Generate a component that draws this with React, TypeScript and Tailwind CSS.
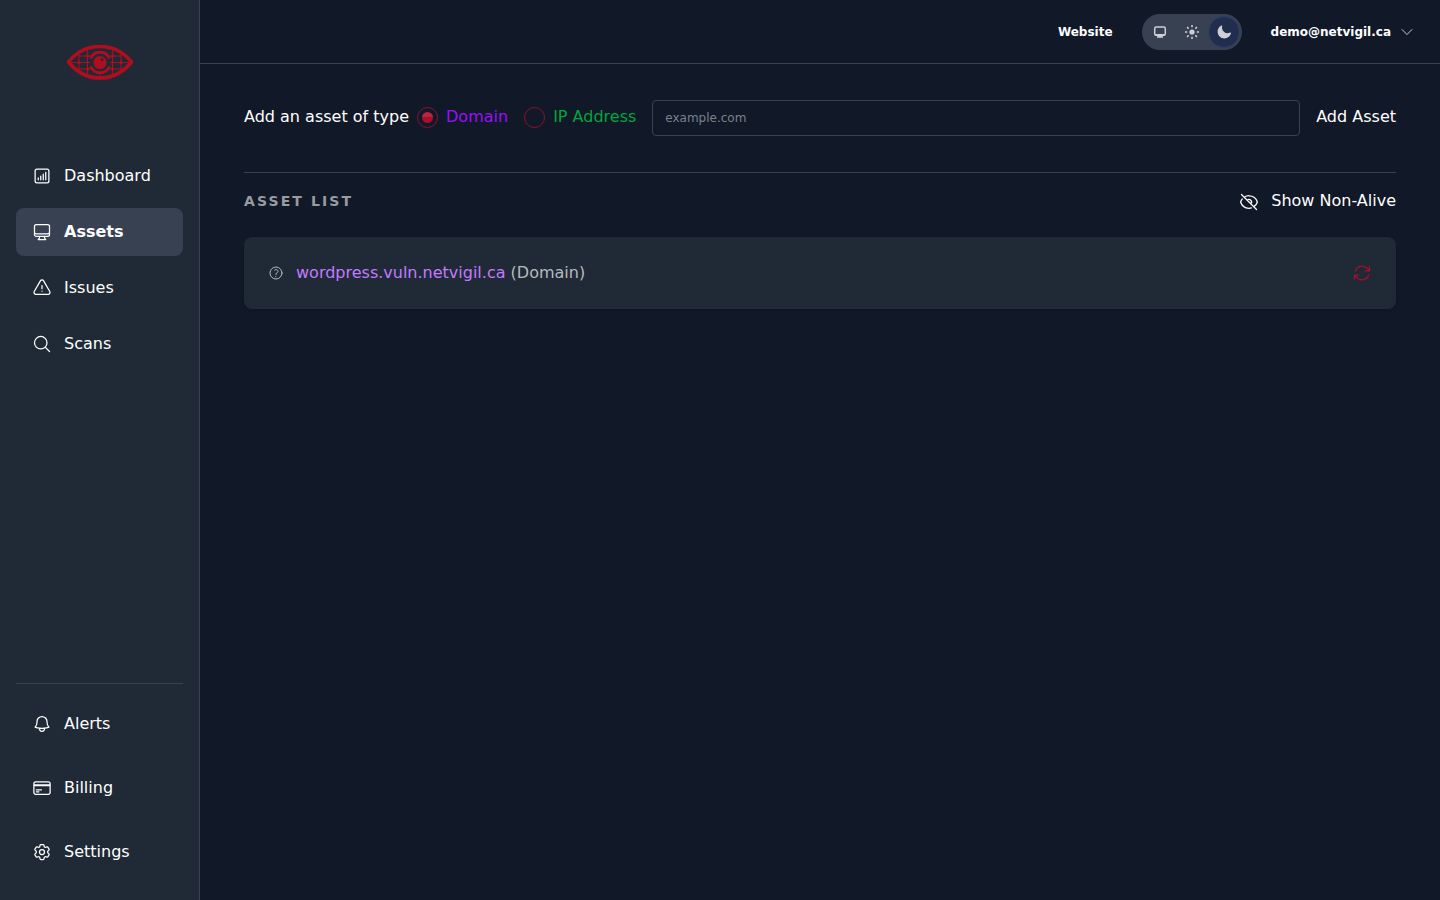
import { useState } from 'react';
import type { ReactNode } from 'react';
import type { IconType } from 'react-icons';
import {
  HiOutlineArrowPath,
  HiOutlineBell,
  HiOutlineChartBarSquare,
  HiOutlineChevronDown,
  HiOutlineCog6Tooth,
  HiOutlineComputerDesktop,
  HiOutlineCreditCard,
  HiOutlineExclamationTriangle,
  HiOutlineEyeSlash,
  HiOutlineMagnifyingGlass,
  HiOutlineQuestionMarkCircle,
} from 'react-icons/hi2';

function Logo() {
  return (
    <svg viewBox="0 0 66 36" className="h-9 w-[66px] text-[#b00d1e]" fill="none" stroke="currentColor" role="img" aria-label="NetVigil">
      <path d="M1.5 18C10 7.500 20 2.500 33 2.500s23 5 31.500 15.500C56 28.500 46 34 33 34S10 28.500 1.500 18Z" strokeWidth="3.600" strokeLinejoin="round" />
      <path d="M2 18.500h21M43 18.500h21M12 12h12M42 12h12M12 25h12M42 25h12M12 10v17M20.500 5v26M45.500 5v26M54 10v17M33 29v5" strokeWidth="1.200" />
      <path d="M23.700 14.500a10.200 10.200 0 0 1 18.800 0M42.500 22.500a10.200 10.200 0 0 1-18.800 0" strokeWidth="2.800" />
      <circle cx="33" cy="18.500" r="6.600" fill="currentColor" stroke="none" />
      <circle cx="35" cy="15.500" r="1.500" fill="#212a37" stroke="none" />
      <g fill="currentColor" stroke="none">
        <circle cx="12" cy="18.500" r="1.700" />
        <circle cx="20.500" cy="12" r="1.700" />
        <circle cx="20.500" cy="25" r="1.700" />
        <circle cx="45.500" cy="12" r="1.700" />
        <circle cx="45.500" cy="25" r="1.700" />
        <circle cx="54" cy="18.500" r="1.700" />
      </g>
    </svg>
  );
}

function NavItem({ icon: Icon, active, children }: { icon: IconType; active?: boolean; children: ReactNode }) {
  return (
    <a
      href="#"
      aria-current={active ? 'page' : undefined}
      className={`flex h-12 items-center gap-3 rounded-lg px-4 ${active ? 'bg-[#384152] font-bold' : ''}`}
    >
      <Icon size={20} />
      <span className="pb-px">{children}</span>
    </a>
  );
}

function Sidebar() {
  return (
    <aside className="flex w-[200px] shrink-0 flex-col border-r border-[#374151] bg-[#202a37] px-4 pb-6">
      <a href="#" className="flex h-[124px] items-center justify-center">
        <Logo />
      </a>
      <nav className="mt-7 flex flex-col gap-2">
        <NavItem icon={HiOutlineChartBarSquare}>Dashboard</NavItem>
        <NavItem icon={HiOutlineComputerDesktop} active>Assets</NavItem>
        <NavItem icon={HiOutlineExclamationTriangle}>Issues</NavItem>
        <NavItem icon={HiOutlineMagnifyingGlass}>Scans</NavItem>
      </nav>
      <nav className="mt-auto flex flex-col gap-4 border-t border-[#374151] pt-4">
        <NavItem icon={HiOutlineBell}>Alerts</NavItem>
        <NavItem icon={HiOutlineCreditCard}>Billing</NavItem>
        <NavItem icon={HiOutlineCog6Tooth}>Settings</NavItem>
      </nav>
    </aside>
  );
}

function SystemIcon() {
  return (
    <svg viewBox="0 0 16 16" className="size-4" fill="none" stroke="currentColor">
      <rect x="2.700" y="2.900" width="10.600" height="8.300" rx="1.500" strokeWidth="1.500" />
      <path d="M3 10.800h10" strokeWidth="1.600" />
      <path d="M5.500 11h5l.5 2.200a.5.500 0 0 1-.5.600h-5a.5.500 0 0 1-.5-.6z" fill="currentColor" stroke="none" />
    </svg>
  );
}

function SunIcon() {
  return (
    <svg viewBox="0 0 16 16" className="size-4" fill="none" stroke="currentColor" strokeWidth="1.500">
      <circle cx="8" cy="8" r="2.600" fill="currentColor" stroke="none" />
      <path d="M8 1v2.200M8 12.800V15M1 8h2.200M12.800 8H15M3.100 3.100l1.500 1.500M11.400 11.400l1.500 1.500M3.100 12.900l1.500-1.500M11.400 4.600l1.500-1.500" />
    </svg>
  );
}

function MoonIcon() {
  return (
    <svg viewBox="0 0 20 20" className="size-4" fill="currentColor">
      <path d="M7.455 2.004a.75.75 0 0 1 .26.77 7 7 0 0 0 9.958 7.967.75.75 0 0 1 1.067.853A8.500 8.500 0 1 1 6.647 1.921a.75.75 0 0 1 .808.083Z" />
    </svg>
  );
}

const themes = [
  { name: 'System', icon: SystemIcon },
  { name: 'Light', icon: SunIcon },
  { name: 'Dark', icon: MoonIcon },
];

function Header() {
  const [theme, setTheme] = useState('Dark');

  return (
    <header className="flex h-16 items-center justify-end gap-[29px] border-b border-[#374151] pr-[25px] text-xs font-bold">
      <a href="#">Website</a>
      <div className="flex h-9 items-center rounded-full bg-[#384152] px-0.5">
        {themes.map(({ name, icon: Icon }) => (
          <button
            key={name}
            type="button"
            aria-label={name}
            aria-pressed={theme === name}
            onClick={() => setTheme(name)}
            className={`flex size-8 items-center justify-center rounded-full border text-[#cdd0d6] ${theme === name ? 'border-[#2b3f68] bg-[#212d4c]' : 'border-transparent'}`}
          >
            <Icon />
          </button>
        ))}
      </div>
      <button type="button" className="flex items-center gap-2 font-bold">
        demo@netvigil.ca
        <HiOutlineChevronDown size={16} className="text-[#c5c8cd]" />
      </button>
    </header>
  );
}

function TypeOption({ value, checked, onChange, className }: { value: string; checked: boolean; onChange: () => void; className: string }) {
  return (
    <label className={`flex items-center gap-2 ${className}`}>
      <input
        type="radio"
        name="asset-type"
        checked={checked}
        onChange={onChange}
        className="grid size-[21px] appearance-none place-content-center rounded-full border border-[#8d1330] before:size-[11px] before:rounded-full checked:before:bg-linear-to-b checked:before:from-[#b92442] checked:before:from-50% checked:before:to-[#a90f2d] checked:before:to-50%"
      />
      {value}
    </label>
  );
}

function AddAsset() {
  const [type, setType] = useState('Domain');

  return (
    <form className="flex items-center gap-4 border-b border-[#374151] pb-9" onSubmit={(e) => e.preventDefault()}>
      <div className="flex items-center gap-4 pb-0.5">
        <div className="flex items-center gap-2">
          <span>Add an asset of type</span>
          <TypeOption value="Domain" checked={type === 'Domain'} onChange={() => setType('Domain')} className="text-[#9810fa]" />
        </div>
        <TypeOption value="IP Address" checked={type === 'IP Address'} onChange={() => setType('IP Address')} className="text-[#00a63e]" />
      </div>
      <input
        type="text"
        aria-label="Asset"
        placeholder="example.com"
        className="h-9 min-w-0 flex-1 rounded border border-[#374151] bg-transparent px-3 text-xs placeholder:text-[#7b818c]"
      />
      <button type="submit" className="pb-0.5">Add Asset</button>
    </form>
  );
}

export default function App() {
  return (
    <div className="flex min-h-screen bg-[#111827] font-['DejaVu_Sans',sans-serif] text-base text-white">
      <Sidebar />
      <div className="min-w-0 flex-1">
        <Header />
        <main className="px-11 pt-9">
          <AddAsset />
          <div className="mt-4 flex items-center justify-between">
            <h2 className="pb-0.5 text-sm font-bold tracking-[0.15em] text-[#989b9f] uppercase">Asset List</h2>
            <button type="button" className="flex items-center gap-3">
              <HiOutlineEyeSlash size={20} />
              <span className="pb-0.5">Show Non-Alive</span>
            </button>
          </div>
          <ul className="mt-[22px]">
            <li className="flex h-[72px] items-center gap-3 rounded-lg bg-[#202a37] px-6 text-[#b6b9be] shadow-sm">
              <HiOutlineQuestionMarkCircle size={16} />
              <span className="pb-px">
                <a href="#" className="text-[#c27aff]">wordpress.vuln.netvigil.ca</a> (Domain)
              </span>
              <button type="button" aria-label="Rescan" className="ml-auto text-[#a50f2d]">
                <HiOutlineArrowPath size={20} />
              </button>
            </li>
          </ul>
        </main>
      </div>
    </div>
  );
}
